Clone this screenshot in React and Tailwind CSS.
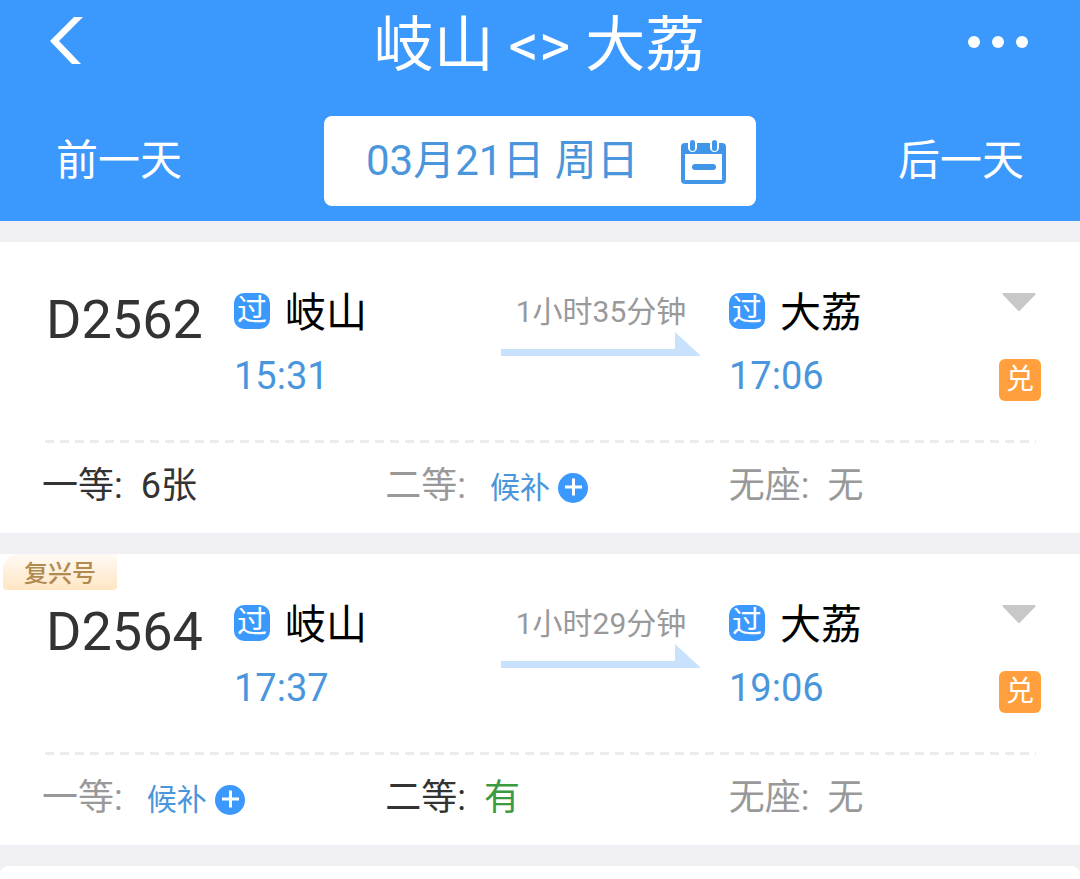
import React from 'react';

const trains = [
  {
    id: 'D2562',
    from: '岐山',
    to: '大荔',
    departs: '15:31',
    arrives: '17:06',
    duration: '1小时35分钟',
    seats: [
      { name: '一等', status: 'left', text: '6张' },
      { name: '二等', status: 'waitlist', text: '候补' },
      { name: '无座', status: 'none', text: '无' }
    ]
  },
  {
    id: 'D2564',
    tag: '复兴号',
    from: '岐山',
    to: '大荔',
    departs: '17:37',
    arrives: '19:06',
    duration: '1小时29分钟',
    seats: [
      { name: '一等', status: 'waitlist', text: '候补' },
      { name: '二等', status: 'available', text: '有' },
      { name: '无座', status: 'none', text: '无' }
    ]
  }
];

const seatColors = {
  left: 'text-[#333333]',
  available: 'text-[#333333]',
  waitlist: 'text-[#999999]',
  none: 'text-[#999999]'
};

const CalendarIcon = () => (
  <svg className="w-[45px] h-[45px]" viewBox="0 0 45 45" aria-hidden="true">
    <rect x="0" y="4" width="45" height="41" rx="4" fill="#4196e8" />
    <rect x="4" y="15" width="37" height="26" fill="#fff" />
    <rect x="7" y="-4" width="9" height="17" rx="4.5" fill="#fff" />
    <rect x="29" y="-4" width="9" height="17" rx="4.5" fill="#fff" />
    <rect x="9" y="1" width="5" height="11" rx="2.5" fill="#4196e8" />
    <rect x="31" y="1" width="5" height="11" rx="2.5" fill="#4196e8" />
    <rect x="11" y="25" width="24" height="6" rx="3" fill="#4196e8" />
  </svg>
);

const Header = () => (
  <header className="bg-[#3b98fc] text-white pb-[15px]">
    <div className="flex items-center justify-between h-[84px] pl-[50px] pr-[52px]">
      <button type="button" aria-label="返回" className="w-[61px] pb-1">
        <svg className="w-[33px] h-[47px]" viewBox="0 0 33 47" aria-hidden="true">
          <path d="M24 0H33L9 24L31 47H22L0 24Z" fill="#fff" />
        </svg>
      </button>
      <h1 className="pt-2 text-[60px] leading-[84px] whitespace-nowrap">岐山 &lt;&gt; 大荔</h1>
      <button type="button" aria-label="更多" className="flex gap-3">
        <span className="w-3 h-3 rounded-full bg-white" />
        <span className="w-3 h-3 rounded-full bg-white" />
        <span className="w-3 h-3 rounded-full bg-white" />
      </button>
    </div>
    <div className="grid grid-cols-[3fr_4fr_3fr] items-center mt-8 text-[42px]">
      <button type="button" className="justify-self-start pl-14 leading-[90px]">前一天</button>
      <button
        type="button"
        className="flex items-center justify-between h-[90px] pl-[42px] pr-[30px] rounded-lg bg-white text-[#4a96dc]"
      >
        <span className="leading-[90px] whitespace-nowrap">03月21日 周日</span>
        <CalendarIcon />
      </button>
      <button type="button" className="justify-self-end pr-14 leading-[90px]">后一天</button>
    </div>
  </header>
);

const Station = ({ name, time }) => (
  <div>
    <div className="flex items-center gap-[15px] h-[38px]">
      <span className="flex items-center justify-center w-9 h-9 rounded-[10px] bg-[#3b98fc] text-white text-[30px] leading-[34px] pb-0.5">
        过
      </span>
      <span className="pt-1 text-[41px] leading-10 text-black">{name}</span>
    </div>
    <time className="block mt-[26px] text-[38px] leading-10 text-[#4a96dc]">{time}</time>
  </div>
);

const Seat = ({ seat }) => (
  <li className={`flex items-center gap-[18px] h-[86px] text-[36px] leading-[82px] ${seatColors[seat.status]}`}>
    <span>{seat.name}:</span>
    {seat.status === 'waitlist' ? (
      <button type="button" className="flex items-center gap-2 pt-1 ml-1.5 text-[30px] text-[#4a96dc]">
        {seat.text}
        <svg className="w-[30px] h-[30px]" viewBox="0 0 30 30" aria-hidden="true">
          <circle cx="15" cy="15" r="15" fill="#3b98fc" />
          <path d="M7 14H24M15.500 5.500V22.500" stroke="#fff" strokeWidth="3" />
        </svg>
      </button>
    ) : (
      <span className={seat.status === 'available' ? 'text-[#3a9a3f]' : ''}>{seat.text}</span>
    )}
  </li>
);

const TrainCard = ({ train }) => (
  <article className="relative bg-white">
    {train.tag && (
      <span className="absolute top-0 left-[3px] w-[114px] h-9 rounded-tl-2xl rounded-b-sm bg-linear-to-b from-[#fffaf5] to-[#ffe6c2] text-center text-[24px] leading-10 font-medium text-[#b08a50]">
        {train.tag}
      </span>
    )}
    <div className="grid grid-cols-[190px_1fr_228px_1fr_45px] pt-[50px] pb-[39px] pl-11 pr-[39px]">
      <h2 className="pl-0.5 text-[54px] leading-[56px] text-[#333333]">{train.id}</h2>
      <Station name={train.from} time={train.departs} />
      <div className="w-[200px]">
        <p className="text-center text-[30px] leading-10 text-[#999999] whitespace-nowrap">{train.duration}</p>
        <svg className="block w-[200px] h-6" viewBox="0 0 200 24" aria-hidden="true">
          <path d="M0 17H174V0L200 24H0Z" fill="#c8e1fd" />
        </svg>
      </div>
      <Station name={train.to} time={train.arrives} />
      <div className="flex flex-col items-center">
        <button type="button" aria-label="展开" className="h-[67px]">
          <svg className="w-[34px] h-[67px]" viewBox="0 0 34 67" aria-hidden="true">
            <path d="M1 1H33Q34 2 33 3L18 18.500Q17 19.500 16 18.500L1 3Q0 2 1 1Z" fill="#c8c8c8" />
          </svg>
        </button>
        <span className="self-end w-[42px] h-[42px] rounded-md bg-[#ff9f3e] text-white text-center text-[28px] leading-[42px]">
          兑
        </span>
      </div>
    </div>
    <div className="h-[3px] ml-[45px] mr-[44px] bg-[repeating-linear-gradient(90deg,#ececec_0_9px,transparent_9px_15px)]" />
    <ul className="grid grid-cols-3 pb-1 pl-[42px] pr-2">
      {train.seats.map((seat) => (
        <Seat key={seat.name} seat={seat} />
      ))}
    </ul>
  </article>
);

const App = () => (
  <div className="flex flex-col min-h-screen bg-[#efeff4] font-['Roboto','Noto_Sans_CJK_SC',sans-serif]">
    <Header />
    <main className="flex flex-col grow gap-[21px] pt-[21px]">
      {trains.map((train) => (
        <TrainCard key={train.id} train={train} />
      ))}
      <div className="grow rounded-t-lg bg-white" />
    </main>
  </div>
);

export default App;
